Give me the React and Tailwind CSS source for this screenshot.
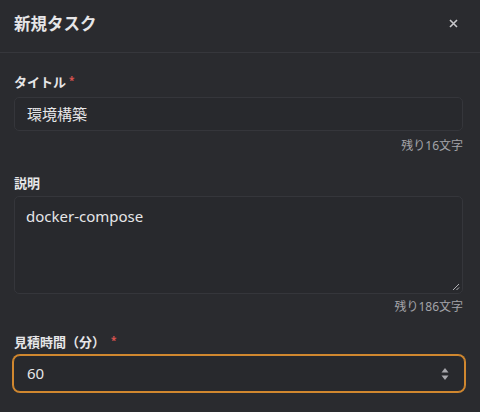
import React from "react";

const font = { fontFamily: '"Noto Sans", "Noto Sans CJK JP", sans-serif' };

export default function App() {
  return (
    <div className="w-[480px] h-[412px] bg-[#2a2b2f] text-[#e6e6e8] overflow-hidden" style={font}>
      <div className="h-[53px] flex items-center justify-between pl-[14px] pr-[22px] border-b border-[#36373c]">
        <h2 className="text-[16.5px] font-bold leading-none -mt-[3px]">新規タスク</h2>
        <svg width="9" height="9" viewBox="0 0 9 9" className="-mt-[5px]">
          <path d="M1 1 L8 8 M8 1 L1 8" stroke="#c8c8cc" strokeWidth="1.6" />
        </svg>
      </div>
      <div className="pl-[14px] pr-[17px] pt-[20px] w-full">
        <div className="text-[13px] font-bold leading-[18px] flex items-start">
          タイトル<span className="text-[#d9534f] text-[10px] leading-[14px] ml-[3px]">*</span>
        </div>
        <div className="mt-[6px] h-[34px] border border-[#35363b] bg-[#28292d] rounded-[5px] flex items-center px-[12px] text-[15px]">
          環境構築
        </div>
        <div className="mt-[6px] text-right text-[12px] leading-[18px] text-[#a3a3a8]">残り16文字</div>

        <div className="mt-[19px] text-[13px] font-bold leading-[18px]">説明</div>
        <div className="relative mt-[4px] h-[98px] border border-[#35363b] bg-[#28292d] rounded-[5px] px-[11px] pt-[8px] text-[15px]">
          docker-compose
          <svg className="absolute right-[2px] bottom-[2px]" width="9" height="9" viewBox="0 0 9 9">
            <path d="M8 2 L2 8 M8 5.5 L5.5 8" stroke="#b0b0b5" strokeWidth="1" />
          </svg>
        </div>
        <div className="mt-[4px] text-right text-[12px] leading-[18px] text-[#a3a3a8]">残り186文字</div>

        <div className="mt-[17px] text-[13px] font-bold leading-[18px] flex items-start">
          見積時間（分）<span className="text-[#d9534f] text-[10px] leading-[14px] ml-[6px]">*</span>
        </div>
        <div className="mt-[4px] -ml-[1px] -mr-[2px] h-[37px] border border-[#d0872f] ring-1 ring-[#d0872f] bg-[#28292d] rounded-[7px] flex items-center justify-between pl-[13px] pr-[15px] text-[15px]">
          <span>60</span>
          <svg width="8" height="16" viewBox="0 0 8 16">
            <path d="M4 2 L7.5 6.5 L0.5 6.5 Z" fill="#a8a8ad" />
            <path d="M4 14 L7.5 9.5 L0.5 9.5 Z" fill="#a8a8ad" />
          </svg>
        </div>
      </div>
    </div>
  );
}
